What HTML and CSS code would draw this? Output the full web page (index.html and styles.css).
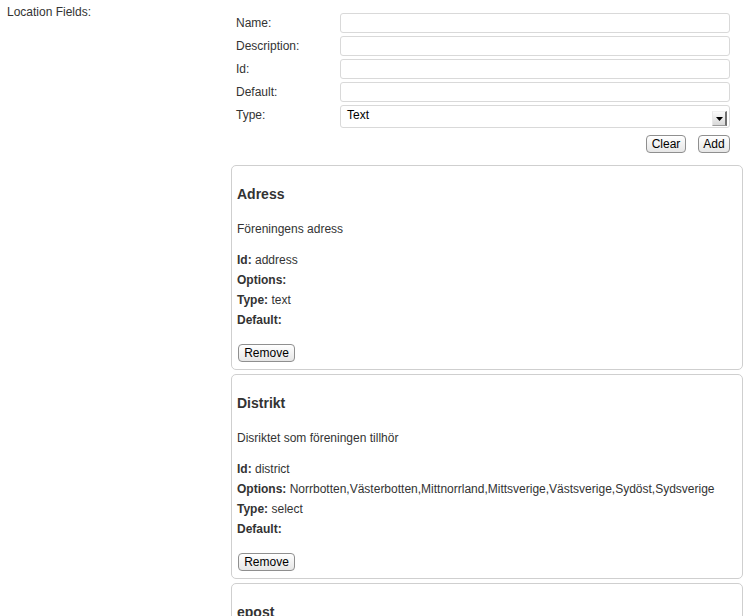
FILE: index.html
```html
<!DOCTYPE html>
<html>
<head>
<meta charset="utf-8">
<link rel="stylesheet" href="styles.css">
</head>
<body>
<div class="page">
  <div class="side">Location Fields:</div>
  <div class="main">
    <div class="field-form">
      <label class="lbl">Name:</label><input class="inp" type="text">
      <label class="lbl">Description:</label><input class="inp" type="text">
      <label class="lbl">Id:</label><input class="inp" type="text">
      <label class="lbl">Default:</label><input class="inp" type="text">
      <label class="lbl lbl-type">Type:</label>
      <div class="select"><span class="select-value">Text</span><span class="select-arrow"><svg width="7" height="4" viewBox="0 0 7 4"><path d="M0 0H7L3.5 4Z" fill="#000"/></svg></span></div>
    </div>
    <div class="actions">
      <button class="btn">Clear</button>
      <button class="btn">Add</button>
    </div>

    <div class="card">
      <h3 class="card-title">Adress</h3>
      <p class="card-desc">Föreningens adress</p>
      <div class="prop"><b>Id:</b> address</div>
      <div class="prop"><b>Options:</b></div>
      <div class="prop"><b>Type:</b> text</div>
      <div class="prop"><b>Default:</b></div>
      <button class="btn btn-remove">Remove</button>
    </div>

    <div class="card">
      <h3 class="card-title">Distrikt</h3>
      <p class="card-desc">Disriktet som föreningen tillhör</p>
      <div class="prop"><b>Id:</b> district</div>
      <div class="prop"><b>Options:</b> Norrbotten,Västerbotten,Mittnorrland,Mittsverige,Västsverige,Sydöst,Sydsverige</div>
      <div class="prop"><b>Type:</b> select</div>
      <div class="prop"><b>Default:</b></div>
      <button class="btn btn-remove">Remove</button>
    </div>

    <div class="card">
      <h3 class="card-title">epost</h3>
      <p class="card-desc">Föreningens e-postadress</p>
      <div class="prop"><b>Id:</b> email</div>
      <div class="prop"><b>Options:</b></div>
      <div class="prop"><b>Type:</b> text</div>
      <div class="prop"><b>Default:</b></div>
      <button class="btn btn-remove">Remove</button>
    </div>
  </div>
</div>
</body>
</html>
```

FILE: styles.css
```css
html, body {
  margin: 0;
  padding: 0;
  background: #fff;
}
body {
  font-family: "Liberation Sans", Arial, Helvetica, sans-serif;
  font-size: 12px;
  color: #333;
}
.page {
  display: flex;
  padding-left: 7px;
}
.side {
  width: 224px;
  flex: none;
  padding-top: 4px;
  line-height: 16px;
}
.main {
  width: 512px;
  flex: none;
}
.field-form {
  display: grid;
  grid-template-columns: 104px 390px;
  row-gap: 3px;
  padding: 13px 13px 0 5px;
}
.lbl {
  line-height: 20px;
  height: 20px;
}
.inp {
  box-sizing: border-box;
  width: 390px;
  height: 20px;
  margin: 0;
  border: 1px solid #d9d9d9;
  border-radius: 3px;
  background: #fff;
  padding: 0 6px;
  font: inherit;
  outline: none;
}
.select {
  box-sizing: border-box;
  height: 23px;
  border: 1px solid #d9d9d9;
  border-radius: 3px;
  display: flex;
  align-items: center;
  justify-content: space-between;
  padding: 0 2px 0 6px;
  color: #000;
}
.select-value {
  line-height: 16px;
  margin-top: -3px;
}
.select-arrow {
  box-sizing: border-box;
  width: 15px;
  height: 15px;
  margin-top: 3px;
  background: linear-gradient(#fafafa, #d8d8d8);
  border-right: 2px solid #707070;
  border-bottom: 1px solid #9a9a9a;
  border-top: 1px solid #f0f0f0;
  border-left: 1px solid #e8e8e8;
  display: flex;
  align-items: center;
  justify-content: center;
  padding-top: 1px;
}
.select-arrow svg {
  display: block;
}
.actions {
  display: flex;
  justify-content: flex-end;
  gap: 12px;
  padding-right: 13px;
  margin-top: 7px;
  margin-bottom: 12px;
}
.btn {
  box-sizing: border-box;
  height: 18px;
  margin: 0;
  padding: 0 5px;
  border: 1px solid #8f8f8f;
  border-radius: 4px;
  background: linear-gradient(#ffffff, #e6e6e6);
  font-family: "Liberation Sans", Arial, Helvetica, sans-serif;
  font-size: 12px;
  line-height: 16px;
  color: #000;
}
.actions .btn:first-child {
  width: 40px;
  padding: 0;
}
.actions .btn:last-child {
  width: 32px;
  padding: 0;
}
.card {
  border: 1px solid #cfcfcf;
  border-radius: 5px;
  padding: 18px 5px 7px;
  margin-bottom: 4px;
}
.card-title {
  margin: 0 0 15px;
  font-size: 14px;
  font-weight: bold;
  line-height: 20px;
  color: #333;
}
.card-desc {
  margin: 0 0 11px;
  line-height: 20px;
}
.prop {
  line-height: 20px;
}
.prop b {
  font-weight: bold;
}
.btn-remove {
  margin-top: 14px;
  margin-left: 1px;
  width: 57px;
  padding: 0;
  display: block;
}
```
